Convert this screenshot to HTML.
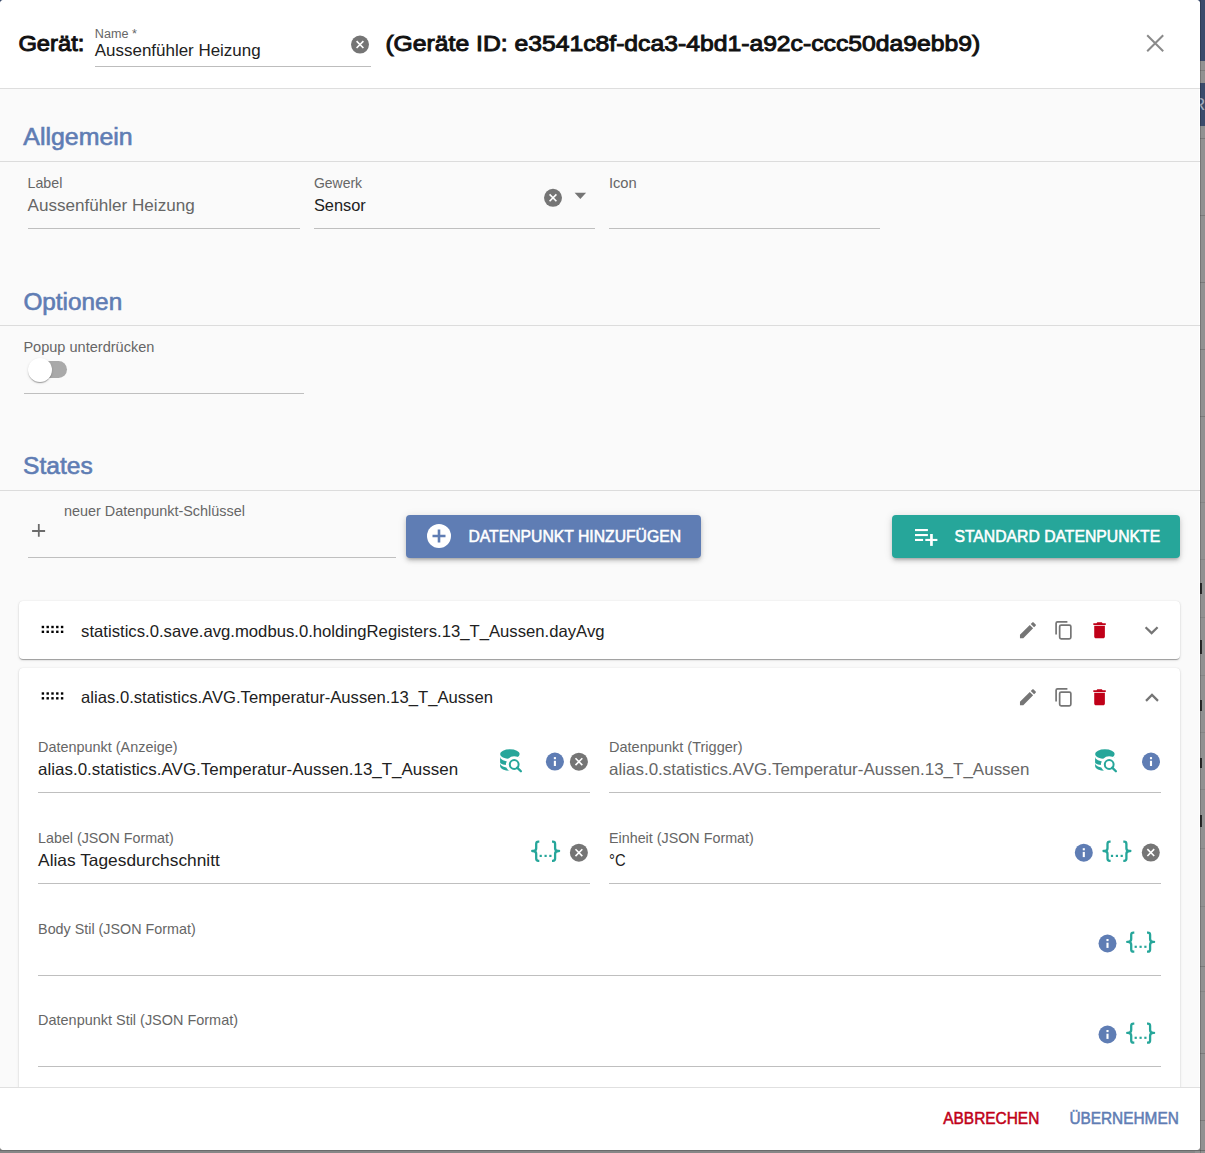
<!DOCTYPE html>
<html><head><meta charset="utf-8"><style>
html,body{margin:0;padding:0}
body{width:1205px;height:1153px;overflow:hidden;position:relative;background:#868686;font-family:"Liberation Sans", sans-serif}
#strip{position:absolute;left:1195px;top:0;width:10px;height:1153px;background:#919191;border-left:0}
#dlg{position:absolute;left:0;top:0;width:1200px;height:1150px;background:#fff;border-radius:4px;overflow:hidden}
#footer{position:absolute;left:0;top:1087px;width:1200px;height:63px;background:#fff;border-top:1px solid #e0e0e0;box-sizing:border-box}
svg text{font-family:"Liberation Sans", sans-serif;white-space:pre}
</style></head><body>
<div id="strip">
<div style="position:absolute;left:0;top:0;width:10px;height:61px;background:#3b4b6b"></div>
<div style="position:absolute;left:0;top:83px;width:10px;height:43px;background:#3b4b6b"></div><div style="position:absolute;left:0;top:70px;width:10px;height:1px;background:#7d7d7d"></div><div style="position:absolute;left:5px;top:90px;width:5px;height:30px;overflow:hidden"><div style="position:absolute;left:-7px;top:5px;font-size:17px;line-height:20px;color:#a3adc0">R</div></div>
<div style="position:absolute;left:5px;top:138px;width:5px;height:1px;background:#7a7a7a"></div><div style="position:absolute;left:5px;top:215px;width:5px;height:1px;background:#7a7a7a"></div><div style="position:absolute;left:5px;top:282px;width:5px;height:1px;background:#7a7a7a"></div><div style="position:absolute;left:5px;top:349px;width:5px;height:1px;background:#7a7a7a"></div><div style="position:absolute;left:5px;top:416px;width:5px;height:1px;background:#7a7a7a"></div><div style="position:absolute;left:5px;top:966px;width:5px;height:1px;background:#7a7a7a"></div><div style="position:absolute;left:5px;top:1053px;width:5px;height:1px;background:#7a7a7a"></div><div style="position:absolute;left:5px;top:1120px;width:5px;height:1px;background:#7a7a7a"></div><div style="position:absolute;left:5px;top:502px;width:5px;height:1px;background:#858585"></div><div style="position:absolute;left:5px;top:559px;width:5px;height:1px;background:#858585"></div><div style="position:absolute;left:5px;top:617px;width:5px;height:1px;background:#858585"></div><div style="position:absolute;left:5px;top:675px;width:5px;height:1px;background:#858585"></div><div style="position:absolute;left:5px;top:732px;width:5px;height:1px;background:#858585"></div><div style="position:absolute;left:5px;top:789px;width:5px;height:1px;background:#858585"></div><div style="position:absolute;left:5px;top:848px;width:5px;height:1px;background:#858585"></div><div style="position:absolute;left:5px;top:906px;width:5px;height:1px;background:#858585"></div><div style="position:absolute;left:5px;top:991px;width:5px;height:1px;background:#858585"></div><div style="position:absolute;left:5px;top:583px;width:2px;height:11px;background:#2a2a2a"></div><div style="position:absolute;left:5px;top:640px;width:2px;height:14px;background:#2a2a2a"></div><div style="position:absolute;left:5px;top:700px;width:2px;height:11px;background:#2a2a2a"></div><div style="position:absolute;left:5px;top:758px;width:2px;height:10px;background:#2a2a2a"></div><div style="position:absolute;left:5px;top:815px;width:2px;height:12px;background:#2a2a2a"></div>
</div>
<div style="position:absolute;left:0;top:1150px;width:1205px;height:1px;background:#6b6b6b"></div><div style="position:absolute;left:1200px;top:0;width:1px;height:1153px;background:rgba(0,0,0,.18)"></div>
<div style="position:absolute;left:0;top:0;width:5px;height:5px;background:#3b4b6b"></div>
<div id="dlg">
<div style="position:absolute;left:0;top:0;width:1200px;height:88px;background:#fff"></div>
<div style="position:absolute;left:0;top:88px;width:1200px;height:1px;background:#dedede"></div><div style="position:absolute;left:0;top:89px;width:1199px;height:998px;background:#fafafa"></div><div style="position:absolute;left:0;top:1087px;width:1200px;height:1px;background:#e0e0e0"></div><div style="position:absolute;left:0px;top:161px;width:1200px;height:1px;background:#dcdcdc"></div><div style="position:absolute;left:0px;top:325px;width:1200px;height:1px;background:#dcdcdc"></div><div style="position:absolute;left:0px;top:490px;width:1200px;height:1px;background:#dcdcdc"></div><div style="position:absolute;left:95px;top:66px;width:276px;height:1px;background:#bdbdbd"></div><div style="position:absolute;left:28px;top:228px;width:272px;height:1px;background:#bfbfbf"></div><div style="position:absolute;left:314px;top:228px;width:281px;height:1px;background:#bfbfbf"></div><div style="position:absolute;left:609px;top:228px;width:271px;height:1px;background:#bfbfbf"></div><div style="position:absolute;left:24px;top:393px;width:280px;height:1px;background:#bfbfbf"></div><div style="position:absolute;left:33px;top:361px;width:34px;height:17px;border-radius:8.5px;background:#a9a9a9"></div><div style="position:absolute;left:27.8px;top:358px;width:24px;height:24px;border-radius:50%;background:#fff;box-shadow:0 2px 1px -1px rgba(0,0,0,.2),0 1px 1px 0 rgba(0,0,0,.14),0 1px 3px 0 rgba(0,0,0,.12)"></div><div style="position:absolute;left:28px;top:557px;width:368px;height:1px;background:#bfbfbf"></div><div style="position:absolute;left:406px;top:515px;width:295px;height:43px;border-radius:4px;background:#5f7db4;box-shadow:0 3px 3px -2px rgba(0,0,0,.2),0 3px 4px 0 rgba(0,0,0,.14),0 1px 8px 0 rgba(0,0,0,.12)"></div><div style="position:absolute;left:892px;top:515px;width:288px;height:43px;border-radius:4px;background:#26a69a;box-shadow:0 3px 3px -2px rgba(0,0,0,.2),0 3px 4px 0 rgba(0,0,0,.14),0 1px 8px 0 rgba(0,0,0,.12)"></div><div style="position:absolute;left:19px;top:601px;width:1161px;height:58px;border-radius:4px;background:#fff;box-shadow:0 2px 1px -1px rgba(0,0,0,.2),0 1px 1px 0 rgba(0,0,0,.14),0 1px 3px 0 rgba(0,0,0,.12),0 0 1px 0 rgba(0,0,0,.12)"></div><div style="position:absolute;left:19px;top:668px;width:1161px;height:500px;border-radius:4px;background:#fff;box-shadow:0 2px 1px -1px rgba(0,0,0,.2),0 1px 1px 0 rgba(0,0,0,.14),0 1px 3px 0 rgba(0,0,0,.12),0 0 1px 0 rgba(0,0,0,.12)"></div><div style="position:absolute;left:38px;top:792px;width:552px;height:1px;background:#bfbfbf"></div><div style="position:absolute;left:609px;top:792px;width:552px;height:1px;background:#bfbfbf"></div><div style="position:absolute;left:38px;top:883px;width:552px;height:1px;background:#bfbfbf"></div><div style="position:absolute;left:609px;top:883px;width:552px;height:1px;background:#bfbfbf"></div><div style="position:absolute;left:38px;top:975px;width:1123px;height:1px;background:#bfbfbf"></div><div style="position:absolute;left:38px;top:1066px;width:1123px;height:1px;background:#bfbfbf"></div>
<div id="footer"></div>
</div>
<svg style="position:absolute;left:0;top:0" width="1205" height="1153" viewBox="0 0 1205 1153">
<circle cx="360" cy="44.6" r="9.0" fill="#757575"/><path d="M356.58 41.18L363.42 48.02M363.42 41.18L356.58 48.02" stroke="#fff" stroke-width="1.62"/><path d="M1147.2 35.2L1163.2 51.2M1163.2 35.2L1147.2 51.2" stroke="#8a8a8a" stroke-width="2"/><circle cx="553" cy="197.8" r="9.0" fill="#757575"/><path d="M549.58 194.38L556.42 201.22M556.42 194.38L549.58 201.22" stroke="#fff" stroke-width="1.62"/><path d="M574.6 192.8H586.1L580.35 199Z" fill="#757575"/><circle cx="439" cy="536" r="12" fill="#fff"/><path d="M439 529.5V542.5M432.5 536H445.5" stroke="#5f7db4" stroke-width="2.6"/><g fill="#fff"><rect x="915" y="529" width="12.9" height="2.1"/><rect x="915" y="534" width="12.9" height="2.1"/><rect x="915" y="538.9" width="8.1" height="2.1"/><rect x="925.3" y="538.9" width="12.1" height="2.1"/><rect x="930.1" y="534" width="2.7" height="11.9"/></g><path d="M32.1 531H45.1M38.8 524.1V536.8" stroke="#6b6b6b" stroke-width="1.8"/><rect x="41.7" y="625.8" width="2.4" height="2.4" fill="#000"/><rect x="46.5" y="625.8" width="2.4" height="2.4" fill="#000"/><rect x="51.3" y="625.8" width="2.4" height="2.4" fill="#000"/><rect x="56.1" y="625.8" width="2.4" height="2.4" fill="#000"/><rect x="60.9" y="625.8" width="2.4" height="2.4" fill="#000"/><rect x="41.7" y="630.6" width="2.4" height="2.4" fill="#000"/><rect x="46.5" y="630.6" width="2.4" height="2.4" fill="#000"/><rect x="51.3" y="630.6" width="2.4" height="2.4" fill="#000"/><rect x="56.1" y="630.6" width="2.4" height="2.4" fill="#000"/><rect x="60.9" y="630.6" width="2.4" height="2.4" fill="#000"/><path transform="translate(1017.3,619.5) scale(0.8875000000000001)" fill="#757575" d="M3 17.25V21h3.75L17.81 9.94l-3.75-3.75L3 17.25zM20.71 7.04c.39-.39.39-1.02 0-1.41l-2.34-2.34a.9959.9959 0 0 0-1.41 0l-1.83 1.83 3.75 3.75 1.83-1.83z"/><g transform="translate(0.0,0)" fill="none" stroke="#757575" stroke-width="1.7"><path d="M1056.1 634.6V623.3Q1056.1 621.8 1057.6 621.8H1067.4"/><rect x="1059.65" y="625.05" width="11.2" height="13.8" rx="1.5"/></g><path transform="translate(1088.9,619.6) scale(0.8875000000000001)" fill="#c00018" d="M6 19c0 1.1.9 2 2 2h8c1.1 0 2-.9 2-2V7H6v12zM19 4h-3.5l-1-1h-5l-1 1H5v2h14V4z"/><path transform="translate(1138.04,616.70) scale(1.13)" fill="#757575" d="M16.59 8.59L12 13.17 7.41 8.59 6 10l6 6 6-6z"/><rect x="41.7" y="692.3" width="2.4" height="2.4" fill="#000"/><rect x="46.5" y="692.3" width="2.4" height="2.4" fill="#000"/><rect x="51.3" y="692.3" width="2.4" height="2.4" fill="#000"/><rect x="56.1" y="692.3" width="2.4" height="2.4" fill="#000"/><rect x="60.9" y="692.3" width="2.4" height="2.4" fill="#000"/><rect x="41.7" y="697.1" width="2.4" height="2.4" fill="#000"/><rect x="46.5" y="697.1" width="2.4" height="2.4" fill="#000"/><rect x="51.3" y="697.1" width="2.4" height="2.4" fill="#000"/><rect x="56.1" y="697.1" width="2.4" height="2.4" fill="#000"/><rect x="60.9" y="697.1" width="2.4" height="2.4" fill="#000"/><path transform="translate(1017.3,686.5) scale(0.8875000000000001)" fill="#757575" d="M3 17.25V21h3.75L17.81 9.94l-3.75-3.75L3 17.25zM20.71 7.04c.39-.39.39-1.02 0-1.41l-2.34-2.34a.9959.9959 0 0 0-1.41 0l-1.83 1.83 3.75 3.75 1.83-1.83z"/><g transform="translate(0.0,67)" fill="none" stroke="#757575" stroke-width="1.7"><path d="M1056.1 634.6V623.3Q1056.1 621.8 1057.6 621.8H1067.4"/><rect x="1059.65" y="625.05" width="11.2" height="13.8" rx="1.5"/></g><path transform="translate(1088.9,686.6) scale(0.8875000000000001)" fill="#c00018" d="M6 19c0 1.1.9 2 2 2h8c1.1 0 2-.9 2-2V7H6v12zM19 4h-3.5l-1-1h-5l-1 1H5v2h14V4z"/><path transform="translate(1138.44,684.28) scale(1.13)" fill="#757575" d="M12 8l-6 6 1.41 1.41L12 10.83l4.59 4.58L18 14z"/><g transform="translate(-595,0)"><ellipse cx="1104.9" cy="754.1" rx="9.8" ry="4.9" fill="#26a69a"/><path fill="#26a69a" d="M1095.1000000000001 757.1A9.8 4.5 0 0 0 1114.7 757.1L1114.7 762.6A9.8 2.6 0 0 1 1095.1000000000001 762.6Z"/><path fill="#26a69a" d="M1095.1000000000001 763.3A9.8 4.5 0 0 0 1114.7 763.3L1114.7 766.3A9.8 4.4 0 0 1 1095.1000000000001 766.3Z"/><circle cx="1109.2" cy="764.5" r="8.3" fill="#fff"/><rect x="1112.5" y="757.6" width="4" height="7" fill="#fff"/><circle cx="1109.2" cy="764.5" r="4.4" fill="none" stroke="#26a69a" stroke-width="2"/><path d="M1112.2 767.6L1115.9 771.3" stroke="#26a69a" stroke-width="2.3" stroke-linecap="round"/></g><circle cx="554.9" cy="761.6" r="9.0" fill="#5f7db4"/><rect x="553.85" y="760.80" width="2.1" height="5.2" fill="#fff"/><rect x="553.85" y="757.10" width="2.1" height="2.1" fill="#fff"/><circle cx="578.9" cy="761.7" r="9.0" fill="#757575"/><path d="M575.48 758.28L582.32 765.12M582.32 758.28L575.48 765.12" stroke="#fff" stroke-width="1.62"/><g transform="translate(0,0)"><ellipse cx="1104.9" cy="754.1" rx="9.8" ry="4.9" fill="#26a69a"/><path fill="#26a69a" d="M1095.1000000000001 757.1A9.8 4.5 0 0 0 1114.7 757.1L1114.7 762.6A9.8 2.6 0 0 1 1095.1000000000001 762.6Z"/><path fill="#26a69a" d="M1095.1000000000001 763.3A9.8 4.5 0 0 0 1114.7 763.3L1114.7 766.3A9.8 4.4 0 0 1 1095.1000000000001 766.3Z"/><circle cx="1109.2" cy="764.5" r="8.3" fill="#fff"/><rect x="1112.5" y="757.6" width="4" height="7" fill="#fff"/><circle cx="1109.2" cy="764.5" r="4.4" fill="none" stroke="#26a69a" stroke-width="2"/><path d="M1112.2 767.6L1115.9 771.3" stroke="#26a69a" stroke-width="2.3" stroke-linecap="round"/></g><circle cx="1151" cy="761.6" r="9.0" fill="#5f7db4"/><rect x="1149.95" y="760.80" width="2.1" height="5.2" fill="#fff"/><rect x="1149.95" y="757.10" width="2.1" height="2.1" fill="#fff"/><g transform="translate(531,840.6)" fill="none" stroke="#26a69a" stroke-width="2.3" stroke-linejoin="round"><path d="M8.3 1.1H7.4Q5.2 1.1 5.2 3.3V7.6Q5.2 10.4 2.0 10.4H1.2H2.0Q5.2 10.4 5.2 13.2V18Q5.2 20.2 7.4 20.2H8.3"/><path d="M21.0 1.1H21.9Q24.1 1.1 24.1 3.3V7.6Q24.1 10.4 27.3 10.4H28.1H27.3Q24.1 10.4 24.1 13.2V18Q24.1 20.2 21.9 20.2H21.0"/></g><g fill="#26a69a"><rect x="539.6" y="854.8" width="2.2" height="2.2"/><rect x="544.5" y="854.8" width="2.2" height="2.2"/><rect x="549.3" y="854.8" width="2.2" height="2.2"/></g><circle cx="578.9" cy="852.7" r="9.0" fill="#757575"/><path d="M575.48 849.28L582.32 856.12M582.32 849.28L575.48 856.12" stroke="#fff" stroke-width="1.62"/><circle cx="1083.8" cy="852.7" r="9.0" fill="#5f7db4"/><rect x="1082.75" y="851.90" width="2.1" height="5.2" fill="#fff"/><rect x="1082.75" y="848.20" width="2.1" height="2.1" fill="#fff"/><g transform="translate(1102.3,840.6)" fill="none" stroke="#26a69a" stroke-width="2.3" stroke-linejoin="round"><path d="M8.3 1.1H7.4Q5.2 1.1 5.2 3.3V7.6Q5.2 10.4 2.0 10.4H1.2H2.0Q5.2 10.4 5.2 13.2V18Q5.2 20.2 7.4 20.2H8.3"/><path d="M21.0 1.1H21.9Q24.1 1.1 24.1 3.3V7.6Q24.1 10.4 27.3 10.4H28.1H27.3Q24.1 10.4 24.1 13.2V18Q24.1 20.2 21.9 20.2H21.0"/></g><g fill="#26a69a"><rect x="1110.9" y="854.8" width="2.2" height="2.2"/><rect x="1115.8" y="854.8" width="2.2" height="2.2"/><rect x="1120.6" y="854.8" width="2.2" height="2.2"/></g><circle cx="1150.8" cy="852.6" r="9.0" fill="#757575"/><path d="M1147.38 849.18L1154.22 856.02M1154.22 849.18L1147.38 856.02" stroke="#fff" stroke-width="1.62"/><circle cx="1107.5" cy="943.5" r="9.0" fill="#5f7db4"/><rect x="1106.45" y="942.70" width="2.1" height="5.2" fill="#fff"/><rect x="1106.45" y="939.00" width="2.1" height="2.1" fill="#fff"/><g transform="translate(1126,931.5)" fill="none" stroke="#26a69a" stroke-width="2.3" stroke-linejoin="round"><path d="M8.3 1.1H7.4Q5.2 1.1 5.2 3.3V7.6Q5.2 10.4 2.0 10.4H1.2H2.0Q5.2 10.4 5.2 13.2V18Q5.2 20.2 7.4 20.2H8.3"/><path d="M21.0 1.1H21.9Q24.1 1.1 24.1 3.3V7.6Q24.1 10.4 27.3 10.4H28.1H27.3Q24.1 10.4 24.1 13.2V18Q24.1 20.2 21.9 20.2H21.0"/></g><g fill="#26a69a"><rect x="1134.6" y="945.7" width="2.2" height="2.2"/><rect x="1139.5" y="945.7" width="2.2" height="2.2"/><rect x="1144.3" y="945.7" width="2.2" height="2.2"/></g><circle cx="1107.5" cy="1034.5" r="9.0" fill="#5f7db4"/><rect x="1106.45" y="1033.70" width="2.1" height="5.2" fill="#fff"/><rect x="1106.45" y="1030.00" width="2.1" height="2.1" fill="#fff"/><g transform="translate(1126,1022.5)" fill="none" stroke="#26a69a" stroke-width="2.3" stroke-linejoin="round"><path d="M8.3 1.1H7.4Q5.2 1.1 5.2 3.3V7.6Q5.2 10.4 2.0 10.4H1.2H2.0Q5.2 10.4 5.2 13.2V18Q5.2 20.2 7.4 20.2H8.3"/><path d="M21.0 1.1H21.9Q24.1 1.1 24.1 3.3V7.6Q24.1 10.4 27.3 10.4H28.1H27.3Q24.1 10.4 24.1 13.2V18Q24.1 20.2 21.9 20.2H21.0"/></g><g fill="#26a69a"><rect x="1134.6" y="1036.7" width="2.2" height="2.2"/><rect x="1139.5" y="1036.7" width="2.2" height="2.2"/><rect x="1144.3" y="1036.7" width="2.2" height="2.2"/></g>
<text x="18.4" y="51.3" font-size="22.5" font-weight="400" fill="#111" stroke="#111" stroke-width="0.95" textLength="66.0" lengthAdjust="spacingAndGlyphs">Gerät:</text><text x="94.8" y="38.2" font-size="12" font-weight="400" fill="#666666" textLength="42.0" lengthAdjust="spacingAndGlyphs">Name *</text><text x="94.8" y="55.7" font-size="16.5" font-weight="400" fill="#212121" textLength="165.8" lengthAdjust="spacingAndGlyphs">Aussenfühler Heizung</text><text x="385.4" y="51.3" font-size="22.5" font-weight="400" fill="#111" stroke="#111" stroke-width="0.95" textLength="594.8" lengthAdjust="spacingAndGlyphs">(Geräte ID: e3541c8f-dca3-4bd1-a92c-ccc50da9ebb9)</text><text x="23.3" y="145" font-size="23" font-weight="400" fill="#5f7db4" stroke="#5f7db4" stroke-width="0.6" textLength="109.4" lengthAdjust="spacingAndGlyphs">Allgemein</text><text x="27.5" y="188.3" font-size="15" font-weight="400" fill="#666666" textLength="34.8" lengthAdjust="spacingAndGlyphs">Label</text><text x="27.5" y="210.9" font-size="16.5" font-weight="400" fill="#666666" textLength="167.2" lengthAdjust="spacingAndGlyphs">Aussenfühler Heizung</text><text x="313.9" y="188.3" font-size="15" font-weight="400" fill="#666666" textLength="48.2" lengthAdjust="spacingAndGlyphs">Gewerk</text><text x="313.9" y="210.9" font-size="16.5" font-weight="400" fill="#212121" textLength="51.9" lengthAdjust="spacingAndGlyphs">Sensor</text><text x="608.9" y="188.3" font-size="15" font-weight="400" fill="#666666" textLength="27.8" lengthAdjust="spacingAndGlyphs">Icon</text><text x="23.4" y="309.7" font-size="23" font-weight="400" fill="#5f7db4" stroke="#5f7db4" stroke-width="0.6" textLength="98.8" lengthAdjust="spacingAndGlyphs">Optionen</text><text x="23.4" y="352.2" font-size="15" font-weight="400" fill="#666666" textLength="131.0" lengthAdjust="spacingAndGlyphs">Popup unterdrücken</text><text x="23.1" y="473.8" font-size="23" font-weight="400" fill="#5f7db4" stroke="#5f7db4" stroke-width="0.6" textLength="69.7" lengthAdjust="spacingAndGlyphs">States</text><text x="63.9" y="516" font-size="15" font-weight="400" fill="#666666" textLength="181.0" lengthAdjust="spacingAndGlyphs">neuer Datenpunkt-Schlüssel</text><text x="468.4" y="542.3" font-size="16.5" font-weight="400" fill="#fff" stroke="#fff" stroke-width="0.55" textLength="212.7" lengthAdjust="spacingAndGlyphs">DATENPUNKT HINZUFÜGEN</text><text x="954.4" y="542.3" font-size="16.5" font-weight="400" fill="#fff" stroke="#fff" stroke-width="0.55" textLength="205.8" lengthAdjust="spacingAndGlyphs">STANDARD DATENPUNKTE</text><text x="81.1" y="636.5" font-size="16.5" font-weight="400" fill="#212121" textLength="523.4" lengthAdjust="spacingAndGlyphs">statistics.0.save.avg.modbus.0.holdingRegisters.13_T_Aussen.dayAvg</text><text x="81.1" y="702.9" font-size="16.5" font-weight="400" fill="#212121" textLength="411.8" lengthAdjust="spacingAndGlyphs">alias.0.statistics.AVG.Temperatur-Aussen.13_T_Aussen</text><text x="38.1" y="752.4" font-size="15" font-weight="400" fill="#666666" textLength="139.4" lengthAdjust="spacingAndGlyphs">Datenpunkt (Anzeige)</text><text x="38.1" y="775" font-size="16.5" font-weight="400" fill="#212121" textLength="420.0" lengthAdjust="spacingAndGlyphs">alias.0.statistics.AVG.Temperatur-Aussen.13_T_Aussen</text><text x="609.0" y="752.4" font-size="15" font-weight="400" fill="#666666" textLength="133.5" lengthAdjust="spacingAndGlyphs">Datenpunkt (Trigger)</text><text x="609.0" y="775" font-size="16.5" font-weight="400" fill="#666666" textLength="420.5" lengthAdjust="spacingAndGlyphs">alias.0.statistics.AVG.Temperatur-Aussen.13_T_Aussen</text><text x="38.1" y="843.3" font-size="15" font-weight="400" fill="#666666" textLength="135.6" lengthAdjust="spacingAndGlyphs">Label (JSON Format)</text><text x="38.1" y="865.7" font-size="16.5" font-weight="400" fill="#212121" textLength="181.7" lengthAdjust="spacingAndGlyphs">Alias Tagesdurchschnitt</text><text x="609.0" y="843.3" font-size="15" font-weight="400" fill="#666666" textLength="144.8" lengthAdjust="spacingAndGlyphs">Einheit (JSON Format)</text><text x="609.0" y="865.7" font-size="16.5" font-weight="400" fill="#212121" textLength="16.6" lengthAdjust="spacingAndGlyphs">°C</text><text x="38.1" y="933.6" font-size="15" font-weight="400" fill="#666666" textLength="157.6" lengthAdjust="spacingAndGlyphs">Body Stil (JSON Format)</text><text x="38.1" y="1024.5" font-size="15" font-weight="400" fill="#666666" textLength="199.9" lengthAdjust="spacingAndGlyphs">Datenpunkt Stil (JSON Format)</text><text x="943.3" y="1123.7" font-size="16.5" font-weight="400" fill="#c00018" stroke="#c00018" stroke-width="0.55" textLength="96.0" lengthAdjust="spacingAndGlyphs">ABBRECHEN</text><text x="1069.4" y="1123.7" font-size="16.5" font-weight="400" fill="#5f7db4" stroke="#5f7db4" stroke-width="0.55" textLength="109.4" lengthAdjust="spacingAndGlyphs">ÜBERNEHMEN</text>
</svg>
</body></html>
